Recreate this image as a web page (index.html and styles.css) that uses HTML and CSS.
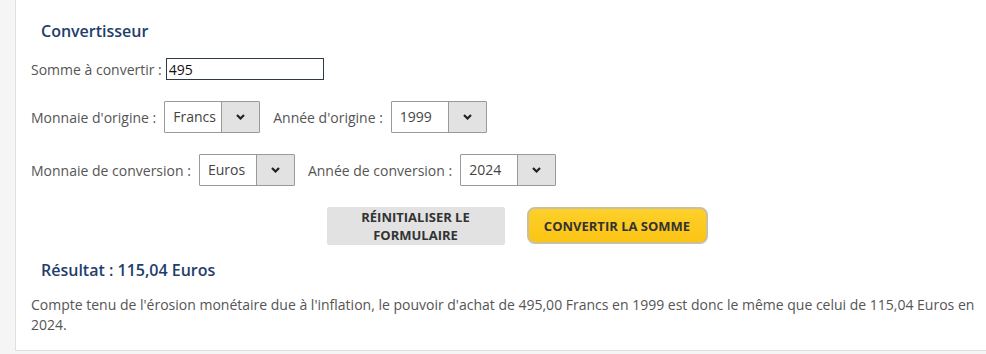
FILE: index.html
```html
<!DOCTYPE html>
<html lang="fr">
<head>
  <meta charset="UTF-8" />
  <meta name="viewport" content="width=device-width, initial-scale=1.0" />
  <title>Convertisseur</title>
  <link rel="stylesheet" href="styles.css">
</head>
<body>
  <div class="card">
    <h2>Convertisseur</h2>

    <div class="row">
      <label for="somme">Somme à convertir :</label>
      <input type="text" id="somme" value="495" />
    </div>

    <div class="row">
      <label>Monnaie d'origine :</label>
      <div class="select">
        <span class="select-value">Francs</span>
        <span class="select-arrow"><svg width="9" height="6" viewBox="0 0 9 6"><path d="M1 1 L4.5 4.5 L8 1" fill="none" stroke="#222" stroke-width="2.2"/></svg></span>
      </div>
      <label class="second">Année d'origine :</label>
      <div class="select">
        <span class="select-value">1999</span>
        <span class="select-arrow"><svg width="9" height="6" viewBox="0 0 9 6"><path d="M1 1 L4.5 4.5 L8 1" fill="none" stroke="#222" stroke-width="2.2"/></svg></span>
      </div>
    </div>

    <div class="row">
      <label>Monnaie de conversion :</label>
      <div class="select">
        <span class="select-value">Euros</span>
        <span class="select-arrow"><svg width="9" height="6" viewBox="0 0 9 6"><path d="M1 1 L4.5 4.5 L8 1" fill="none" stroke="#222" stroke-width="2.2"/></svg></span>
      </div>
      <label class="second">Année de conversion :</label>
      <div class="select">
        <span class="select-value">2024</span>
        <span class="select-arrow"><svg width="9" height="6" viewBox="0 0 9 6"><path d="M1 1 L4.5 4.5 L8 1" fill="none" stroke="#222" stroke-width="2.2"/></svg></span>
      </div>
    </div>

    <div class="buttons">
      <button class="btn-reset">Réinitialiser le<br>formulaire</button>
      <button class="btn-convert">Convertir la somme</button>
    </div>

    <h2 class="result">Résultat : 115,04 Euros</h2>
    <p>Compte tenu de l'érosion monétaire due à l'inflation, le pouvoir d'achat de 495,00 Francs en 1999 est donc le même que celui de 115,04 Euros en 2024.</p>
  </div>
</body>
</html>
```

FILE: styles.css
```css
body {
  margin: 0;
  background-color: #f5f5f5;
  font-family: "Open Sans", sans-serif;
  font-size: 14px;
  color: #555;
}
.card {
  margin-left: 15px;
  background: #fff;
  border-left: 1px solid #e0e0e0;
  border-bottom: 1px solid #e0e0e0;
  padding: 20px 0 15px 15px;
}
h2 {
  margin: 0;
  padding-left: 10px;
  font-size: 16px;
  font-weight: 600;
  line-height: 22px;
  color: #1e3e6b;
}
.row {
  display: flex;
  align-items: center;
  margin-top: 16px;
}
.row + .row {
  margin-top: 21px;
}
label {
  margin-right: 8px;
  white-space: nowrap;
}
label.second {
  margin-left: 13px;
}
input[type="text"] {
  width: 152px;
  height: 20px;
  margin-left: -4px;
  padding: 0 2px;
  border: 1px solid #2b3a44;
  font-family: "Open Sans", sans-serif;
  font-size: 14px;
  color: #111;
  outline: none;
}
.select {
  display: flex;
  height: 30px;
  border: 1px solid #999;
  border-radius: 1px;
}
.select-value {
  width: 48px;
  padding-left: 8px;
  line-height: 30px;
  color: #444;
}
.select-arrow {
  width: 37px;
  display: flex;
  align-items: center;
  justify-content: center;
  background: #e2e2e2;
  border-left: 1px solid #999;
}
.buttons {
  display: flex;
  justify-content: center;
  align-items: flex-start;
  gap: 22px;
  margin-top: 21px;
  padding-left: 17px;
}
button {
  font-family: "Open Sans", sans-serif;
  font-size: 13px;
  font-weight: 700;
  text-transform: uppercase;
  color: #333;
  cursor: pointer;
}
.btn-reset {
  width: 178px;
  height: 38px;
  background: #e2e2e2;
  border: none;
  border-radius: 2px;
  line-height: 18px;
  padding: 0;
}
.btn-convert {
  width: 181px;
  height: 37px;
  background: linear-gradient(#fdd02a, #fbc414);
  border: 2px solid #c9c0a0;
  border-radius: 8px;
  padding: 0;
}
.result {
  margin-top: 14px;
}
p {
  margin: 14px 0 0 0;
  line-height: 20px;
}
```
